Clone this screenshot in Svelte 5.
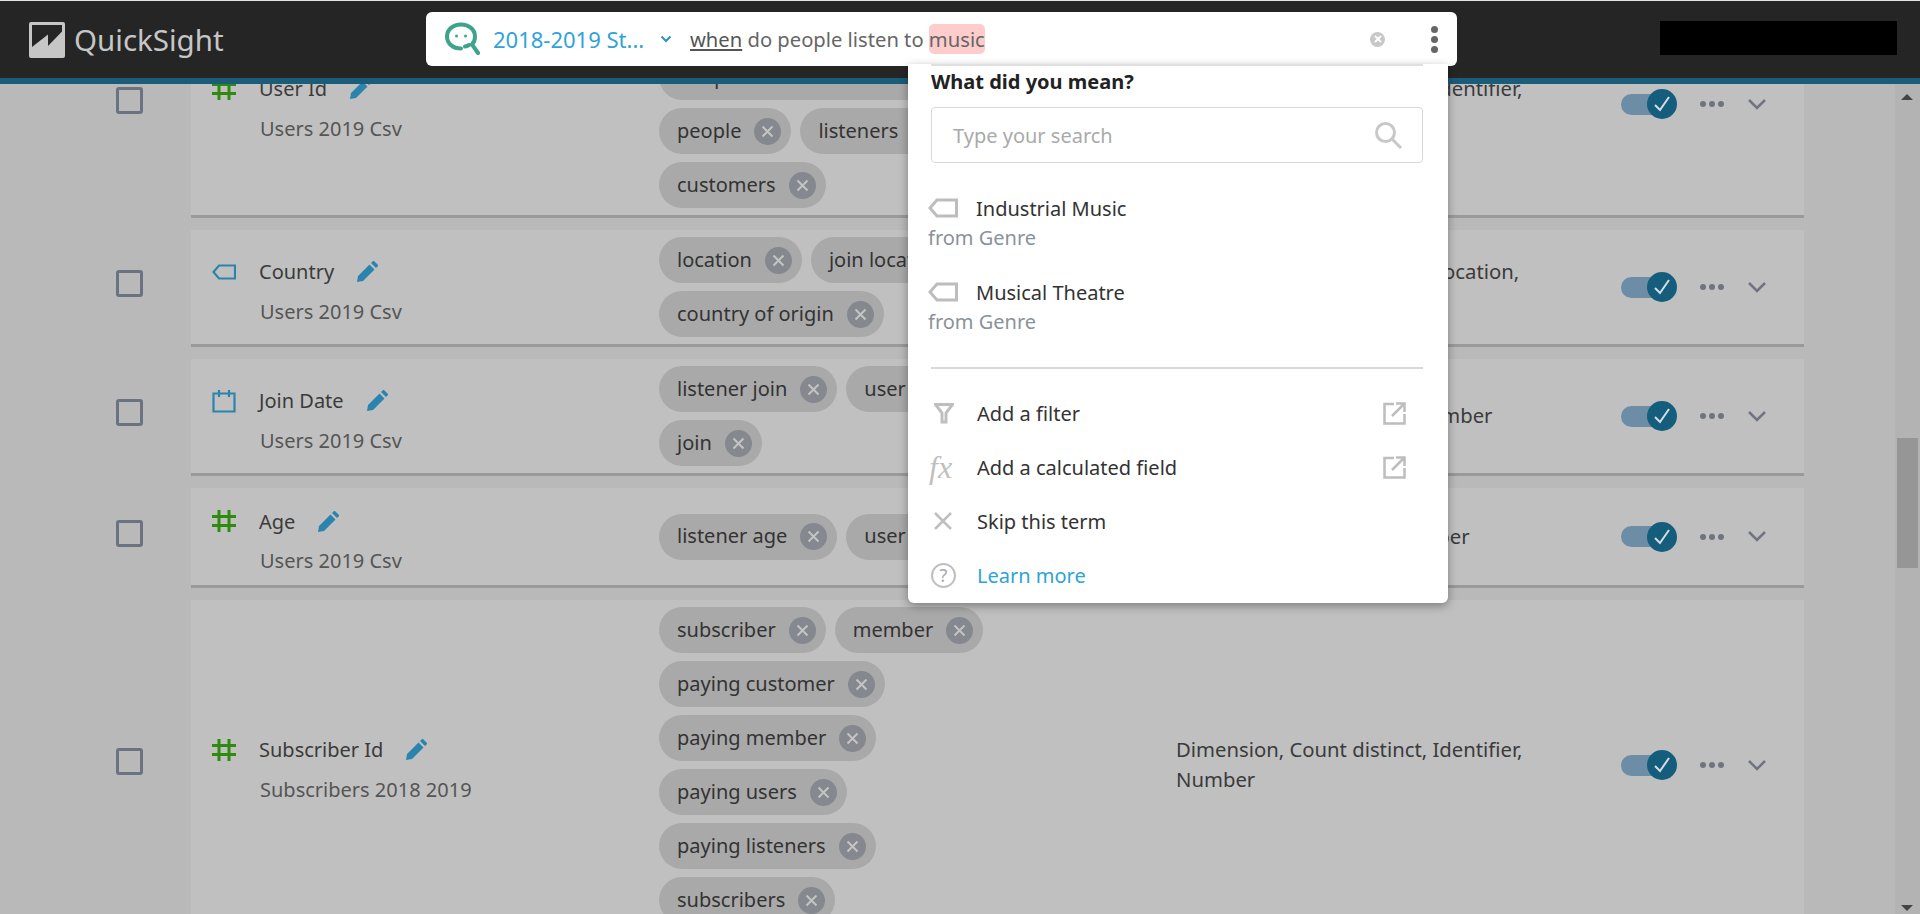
<script>
  const fields = [
    { name: 'User Id', icon: 'hash', source: 'Users 2019 Csv', chips: ['user id', 'user', 'unique listener identifier', 'people', 'listeners', 'customers'], types: 'Dimension, Count distinct, Identifier, Number' },
    { name: 'Country', icon: 'tag', source: 'Users 2019 Csv', chips: ['location', 'join location', 'country of origin'], types: 'Dimension, Count distinct, Location, Country' },
    { name: 'Join Date', icon: 'date', source: 'Users 2019 Csv', chips: ['listener join', 'user join', 'join'], types: 'Dimension, Count, Date, Number' },
    { name: 'Age', icon: 'hash', source: 'Users 2019 Csv', chips: ['listener age', 'user age'], types: 'Dimension, Sum, Age, Number' },
    { name: 'Subscriber Id', icon: 'hash', source: 'Subscribers 2018 2019', chips: ['subscriber', 'member', 'paying customer', 'paying member', 'paying users', 'paying listeners', 'subscribers'], types: 'Dimension, Count distinct, Identifier, Number' }
  ]
</script>

<div class="page">
  <header class="topbar">
    <div class="brand">
      <svg width="36" height="36" viewBox="0 0 36 36">
        <rect width="36" height="36" rx="2" fill="#c6c6c6" />
        <path d="M3 3h30v6.500L19 24v-11.500L3 25z" fill="#252525" />
      </svg>
      <span>QuickSight</span>
    </div>
    <div class="redacted"></div>
  </header>

  <div class="body">
    <main class="list">
      {#each fields as f}
        <div class="row">
          <div class="check"></div>
          <section class="card">
            <div class="name-col">
              <div class="name-line">
                <span class="ficon">
                  {#if f.icon === 'hash'}
                    <svg width="24" height="24" viewBox="0 0 24 24" fill="none" stroke="#2e8b0f" stroke-width="3"><path d="M7 1v22M17 1v22M0 7.500h24M0 16.500h24" /></svg>
                  {:else if f.icon === 'tag'}
                    <svg width="24" height="16" viewBox="0 0 24 16" fill="none" stroke="#2a84ad" stroke-width="2.200"><path d="M23 1.500H7L1.500 8 7 14.500h16z" /></svg>
                  {:else}
                    <svg width="24" height="24" viewBox="0 0 24 24" fill="none" stroke="#2a84ad" stroke-width="2.200"><path d="M1.500 4.500h21v18h-21zM7 1v7M17 1v7" /></svg>
                  {/if}
                </span>
                <span class="name">{f.name}</span>
                <svg class="pencil" width="21" height="21" viewBox="0 0 21 21" fill="#2a84ad"><path d="M0 21l1-6L12.500 3.500l5 5L6 20zM14 2l1.800-1.800a1 1 0 0 1 1.400 0l3.600 3.600a1 1 0 0 1 0 1.400L19 7z" /></svg>
              </div>
              <div class="source">{f.source}</div>
            </div>
            <div class="chips">
              {#each f.chips as c}
                <span class="chip">{c}<i class="chip-x"><svg width="13" height="13" viewBox="0 0 13 13" stroke="#c4c4c4" stroke-width="2"><path d="M1.500 1.500l10 10M11.500 1.500l-10 10" /></svg></i></span>
              {/each}
            </div>
            <div class="types">{f.types}</div>
            <div class="actions">
              <div class="toggle">
                <div class="knob">
                  <svg width="18" height="18" viewBox="0 0 18 18" fill="none" stroke="#d6dde1" stroke-width="2"><path d="M2 10l5 5L16 2" /></svg>
                </div>
              </div>
              <div class="dots"><i></i><i></i><i></i></div>
              <svg width="18" height="11" viewBox="0 0 18 11" fill="none" stroke="#6f7480" stroke-width="2.500"><path d="M1 1l8 8 8-8" /></svg>
            </div>
          </section>
        </div>
      {/each}
    </main>
    <aside class="scrollbar">
      <span class="arrow up"></span>
      <div class="thumb"></div>
      <span class="arrow down"></span>
    </aside>
  </div>

  <!-- Q search bar and its dropdown sit on top of the dimmed page -->
  <div class="searchbar">
    <svg class="q-icon" width="36" height="34" viewBox="0 0 36 34" fill="none" stroke="#3fa38c" stroke-width="4" stroke-linecap="round">
      <path d="M17 26.500C9 26.500 3 21.500 3 14.500S9 2.500 17 2.500s14 5 14 12c0 3.500-1 6-3 8L34 31" />
      <path d="M21 24.500c1.500-.3 3-.8 4-1.500" />
      <circle cx="12.500" cy="14" r="1.500" fill="#3fa38c" stroke="none" />
      <circle cx="21.500" cy="14" r="1.500" fill="#3fa38c" stroke="none" />
    </svg>
    <span class="dataset">2018-2019 St...</span>
    <svg class="caret" width="12" height="8" viewBox="0 0 12 8" fill="none" stroke="#2e90c4" stroke-width="2"><path d="M1.500 1.500L6 6l4.500-4.500" /></svg>
    <div class="query">
      <u>when</u> do people listen to <mark>music</mark>
    </div>
    <span class="clear"><svg width="8" height="8" viewBox="0 0 8 8" stroke="#fff" stroke-width="1.800"><path d="M1 1l6 6M7 1L1 7" /></svg></span>
    <div class="kebab"><i></i><i></i><i></i></div>
  </div>

  <div class="popup">
    <div class="pop-line"></div>
    <h4>What did you mean?</h4>
    <div class="pop-search">
      <span>Type your search</span>
      <svg width="30" height="30" viewBox="0 0 30 30" fill="none" stroke="#c8c8c8" stroke-width="3"><circle cx="12.500" cy="12.500" r="9" /><path d="M19 19l9 9" /></svg>
    </div>
    <div class="suggest first">
      <div class="s-top">
        <svg width="30" height="20" viewBox="0 0 30 20" fill="none" stroke="#bdbdbd" stroke-width="3"><path d="M28.500 2H9L2 10l7 8h19.500z" /></svg>
        <span>Industrial Music</span>
      </div>
      <div class="s-from">from Genre</div>
    </div>
    <div class="suggest">
      <div class="s-top">
        <svg width="30" height="20" viewBox="0 0 30 20" fill="none" stroke="#bdbdbd" stroke-width="3"><path d="M28.500 2H9L2 10l7 8h19.500z" /></svg>
        <span>Musical Theatre</span>
      </div>
      <div class="s-from">from Genre</div>
    </div>
    <div class="pop-divider"></div>
    <div class="menu">
      <div class="m-item">
        <span class="m-icon"><svg width="20" height="21" viewBox="0 0 20 21" fill="none" stroke="#bfbfbf" stroke-width="3"><path d="M1.500 1.500h17L12 10v9H8v-9z" /></svg></span>
        <span class="m-label">Add a filter</span>
        <svg class="ext" width="23" height="23" viewBox="0 0 23 23" fill="none" stroke="#bdbdbd" stroke-width="2.500"><path d="M11 2H1.500v19.500h20V12M9 14L21 2M13 1.500h8.500V10" /></svg>
      </div>
      <div class="m-item">
        <span class="m-icon fx">fx</span>
        <span class="m-label">Add a calculated field</span>
        <svg class="ext" width="23" height="23" viewBox="0 0 23 23" fill="none" stroke="#bdbdbd" stroke-width="2.500"><path d="M11 2H1.500v19.500h20V12M9 14L21 2M13 1.500h8.500V10" /></svg>
      </div>
      <div class="m-item">
        <span class="m-icon"><svg width="18" height="18" viewBox="0 0 18 18" stroke="#bfbfbf" stroke-width="2.500"><path d="M1 1l16 16M17 1L1 17" /></svg></span>
        <span class="m-label">Skip this term</span>
      </div>
      <div class="m-item">
        <span class="m-icon help">?</span>
        <span class="m-label learn">Learn more</span>
      </div>
    </div>
  </div>
</div>

<style>
  :global(body) {
    margin: 0;
    overflow: hidden;
    background: #b9b9b9;
  }
  .page {
    position: relative;
    height: 914px;
    overflow: hidden;
    font-family: "Noto Sans", "Open Sans", sans-serif;
    font-size: 20px;
    color: #3b3b3b;
  }

  /* top bar */
  .topbar {
    position: absolute;
    top: 0;
    left: 0;
    right: 0;
    z-index: 2;
    border-top: 1px solid #e4e4e4;
    border-bottom: 6px solid #1b5c78;
    background: #252525;
    display: flex;
    align-items: center;
    justify-content: space-between;
    padding: 0 23px 0 29px;
    height: 77px;
  }
  .brand {
    display: flex;
    align-items: center;
    gap: 9px;
    color: #c6c6c6;
    font-size: 29.500px;
  }
  .redacted {
    width: 237px;
    height: 34px;
    background: #000;
    margin-top: -4px;
  }

  /* field list */
  .body {
    display: flex;
    height: 914px;
  }
  .list {
    flex: 1;
    margin-top: -7px;
    padding-right: 91px;
  }
  .row {
    display: flex;
    align-items: center;
    margin-bottom: 12px;
  }
  .check {
    width: 21px;
    height: 21px;
    border: 3px solid #6c7380;
    border-radius: 3px;
    margin: -10px 48px 0 116px;
    flex: none;
  }
  .card {
    flex: 1;
    display: flex;
    align-items: center;
    background: #c0c0c0;
    border-bottom: 3px solid #9a9a9a;
    padding: 7px 0;
    min-height: 83px;
  }
  .name-col {
    width: 447px;
    padding-left: 21px;
    flex: none;
    box-sizing: border-box;
  }
  .name-line {
    display: flex;
    align-items: center;
    height: 36px;
  }
  .ficon {
    width: 47px;
    display: flex;
    flex: none;
  }
  .name {
    color: #3b3b3b;
  }
  .pencil {
    margin-left: 23px;
  }
  .source {
    margin: 13px 0 0 48px;
    line-height: 18px;
    color: #555;
  }
  .chips {
    width: 400px;
    flex: none;
    display: flex;
    flex-wrap: wrap;
    gap: 8px 9px;
    margin-right: 117px;
    margin-left: 21px;
  }
  .chip {
    height: 46px;
    box-sizing: border-box;
    padding: 0 10px 2px 18px;
    border-radius: 23px;
    background: #a9a9a9;
    display: flex;
    align-items: center;
    gap: 13px;
    color: #333;
  }
  .chip-x {
    width: 27px;
    height: 27px;
    border-radius: 50%;
    background: #85888f;
    display: flex;
    align-items: center;
    justify-content: center;
    margin-bottom: -2px;
  }
  .types {
    width: 380px;
    flex: none;
    line-height: 30px;
    color: #3b3b3b;
    font-size: 20.300px;
    margin-top: -2px;
  }
  .actions {
    display: flex;
    align-items: center;
    margin-left: 65px;
  }
  .toggle {
    width: 55px;
    height: 21px;
    border-radius: 11px;
    background: #6c8da5;
    position: relative;
    margin-right: 24px;
  }
  .knob {
    position: absolute;
    top: -4.500px;
    right: -1px;
    width: 30px;
    height: 30px;
    border-radius: 50%;
    background: #155d7c;
    display: flex;
    align-items: center;
    justify-content: center;
  }
  .dots {
    display: flex;
    gap: 3px;
    margin-right: 24px;
  }
  .dots i {
    width: 6px;
    height: 6px;
    border-radius: 50%;
    background: #6f7480;
  }

  /* scrollbar */
  .scrollbar {
    position: relative;
    width: 25px;
    flex: none;
    background: #b3b3b3;
  }
  .thumb {
    position: absolute;
    top: 438px;
    left: 2px;
    width: 21px;
    height: 130px;
    background: #969696;
  }
  .arrow {
    position: absolute;
    left: 6px;
    border-left: 6px solid transparent;
    border-right: 6px solid transparent;
  }
  .arrow.up {
    top: 94px;
    border-bottom: 6px solid #444;
  }
  .arrow.down {
    bottom: 3px;
    border-top: 6px solid #444;
  }

  /* search bar */
  .searchbar {
    position: absolute;
    z-index: 4;
    top: 12px;
    left: 426px;
    width: 1031px;
    height: 54px;
    background: #fff;
    border-radius: 6px;
    display: flex;
    align-items: center;
    font-size: 20.200px;
  }
  .q-icon {
    margin-left: 18px;
    flex: none;
  }
  .dataset {
    margin-left: 13px;
    width: 160px;
    color: #2ea3d8;
    white-space: nowrap;
    flex: none;
    font-size: 22px;
  }
  .caret {
    margin-left: 7px;
    flex: none;
  }
  .query {
    margin-left: 18px;
    color: #666;
    white-space: nowrap;
    flex: 1;
  }
  .query u {
    color: #555;
  }
  .query mark {
    display: inline-block;
    line-height: 30px;
    background: #ffcccc;
    border-radius: 5px;
    color: #666;
  }
  .clear {
    width: 15px;
    height: 15px;
    border-radius: 50%;
    background: #c8c8c8;
    display: flex;
    align-items: center;
    justify-content: center;
    margin-right: 46px;
  }
  .kebab {
    display: flex;
    flex-direction: column;
    gap: 3px;
    margin-right: 19px;
  }
  .kebab i {
    width: 7px;
    height: 7px;
    border-radius: 50%;
    background: #666;
  }

  /* "what did you mean" dropdown */
  .popup {
    position: absolute;
    z-index: 5;
    top: 64px;
    left: 908px;
    width: 540px;
    height: 539px;
    background: #fff;
    border-radius: 0 0 6px 6px;
    box-shadow: 0 3px 10px rgba(0, 0, 0, 0.35);
    padding: 0 25px 0 23px;
    box-sizing: border-box;
    color: #333;
  }
  .pop-line {
    height: 2px;
    background: #e0e0e0;
  }
  h4 {
    margin: 3px 0 0;
    font-size: 20px;
    line-height: 25px;
    font-weight: 700;
    color: #222;
  }
  .pop-search {
    margin-top: 13px;
    height: 56px;
    box-sizing: border-box;
    border: 1px solid #d8d8d8;
    border-radius: 4px;
    display: flex;
    align-items: center;
    justify-content: space-between;
    padding: 0 19px 0 21px;
    color: #aaa;
  }
  .suggest {
    margin-left: -3px;
    margin-top: 24px;
  }
  .suggest.first {
    margin-top: 30px;
  }
  .s-top {
    display: flex;
    align-items: center;
    gap: 18px;
    height: 30px;
    color: #333;
  }
  .s-from {
    line-height: 30px;
    color: #8a9299;
  }
  .pop-divider {
    height: 2px;
    background: #d8d8d8;
    margin-top: 30px;
  }
  .menu {
    margin-top: 29px;
    display: flex;
    flex-direction: column;
    gap: 24px;
  }
  .m-item {
    display: flex;
    align-items: center;
    height: 30px;
  }
  .m-icon {
    width: 46px;
    flex: none;
    display: flex;
    padding-left: 3px;
    box-sizing: border-box;
  }
  .m-label {
    flex: 1;
  }
  .learn {
    color: #2ea3d8;
  }
  .ext {
    margin-right: 17px;
  }
  .fx {
    font-family: "Liberation Serif", serif;
    font-style: italic;
    font-size: 32px;
    color: #bfbfbf;
    padding-left: 0;
    margin-left: -2px;
    margin-right: 2px;
  }
  .help {
    width: 25px;
    height: 25px;
    margin-right: 21px;
    border: 2px solid #bfbfbf;
    border-radius: 50%;
    padding: 0;
    justify-content: center;
    align-items: center;
    color: #a9a9a9;
    font-size: 18px;
  }
</style>
